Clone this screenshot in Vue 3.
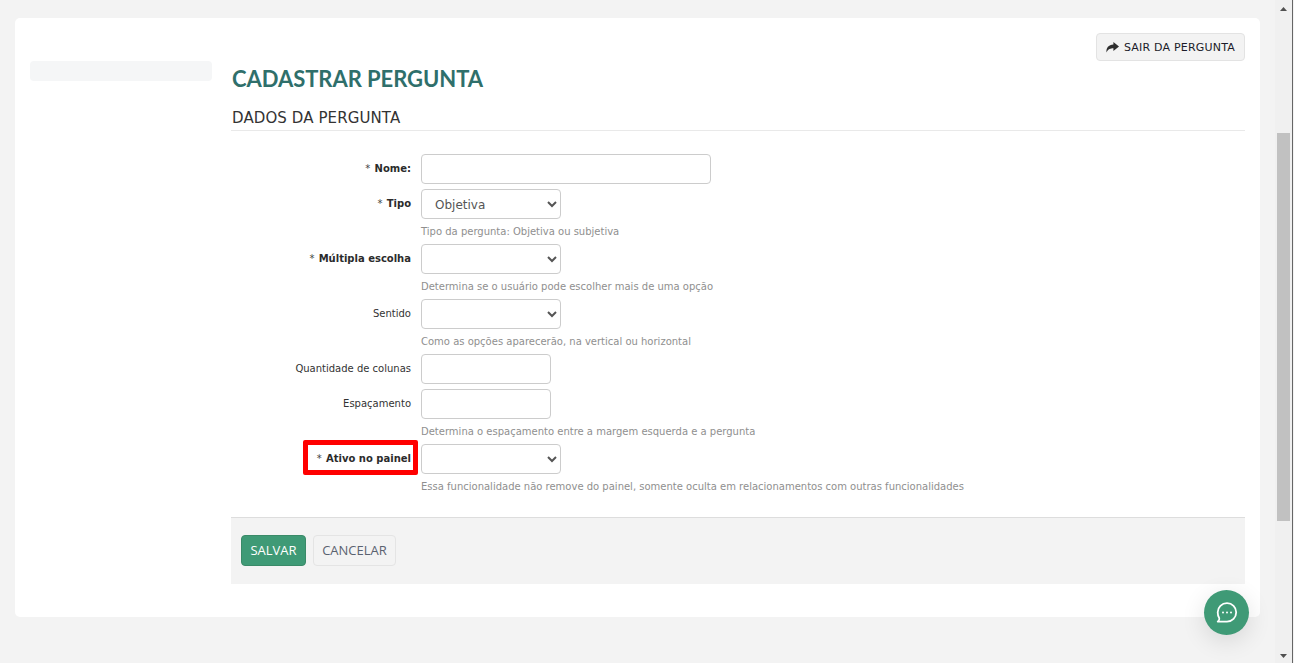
<script setup>
const fields = [
  { label: 'Nome:', req: true, type: 'input', size: 'wide' },
  { label: 'Tipo', req: true, type: 'select', value: 'Objetiva', hint: 'Tipo da pergunta: Objetiva ou subjetiva' },
  { label: 'Múltipla escolha', req: true, type: 'select', hint: 'Determina se o usuário pode escolher mais de uma opção' },
  { label: 'Sentido', type: 'select', hint: 'Como as opções aparecerão, na vertical ou horizontal' },
  { label: 'Quantidade de colunas', type: 'input', size: 'small' },
  { label: 'Espaçamento', type: 'input', size: 'small', hint: 'Determina o espaçamento entre a margem esquerda e a pergunta' },
  { label: 'Ativo no painel', req: true, type: 'select', marked: true, hint: 'Essa funcionalidade não remove do painel, somente oculta em relacionamentos com outras funcionalidades' }
]
</script>

<template>
  <div class="page">
    <main class="viewport">
      <section class="card">
        <aside class="side"><div class="side-pill"></div></aside>
        <div class="content">
          <div class="top-actions">
            <button class="exit" type="button">
              <svg width="13" height="11" viewBox="0 0 13 11"><path d="M7.400 0 13 4.500 7.400 9V6.200C4.600 6.200 2.200 6.800 .5 10.500 0 6 2.600 2.800 7.400 2.600Z" fill="#2e2e2e"/></svg>
              SAIR DA PERGUNTA
            </button>
          </div>
          <h1 class="title">CADASTRAR PERGUNTA</h1>
          <h2 class="section">DADOS DA PERGUNTA</h2>
          <form class="form">
            <div v-for="f in fields" :key="f.label" class="group">
              <div class="row">
                <label class="label" :class="{ strong: f.req }"><span v-if="f.req" class="star">* </span>{{ f.label }}</label>
                <div class="control">
                  <select v-if="f.type === 'select'" class="fld sel">
                    <option>{{ f.value || '' }}</option>
                  </select>
                  <input v-else class="fld" :class="f.size" type="text" />
                  <span v-if="f.marked" class="mark"></span>
                </div>
              </div>
              <p v-if="f.hint" class="hint">{{ f.hint }}</p>
            </div>
          </form>
          <div class="footer">
            <button class="save" type="button">SALVAR</button>
            <button class="cancel" type="button">CANCELAR</button>
          </div>
        </div>
      </section>
    </main>
    <div class="scrollbar">
      <svg class="arrow up" width="7" height="4" viewBox="0 0 7 4"><path d="M3.500 0 7 4H0Z" fill="#505050"/></svg>
      <div class="thumb"></div>
      <svg class="arrow down" width="7" height="4" viewBox="0 0 7 4"><path d="M0 0h7L3.500 4Z" fill="#505050"/></svg>
    </div>
    <button class="chat" type="button" aria-label="Chat">
      <svg width="24" height="24" viewBox="0 0 24 24" fill="none">
        <path d="M12 2.200c5.200 0 9.200 4 9.200 9.100 0 5.200-4 9.300-9.200 9.300H2.700c1.300-1 1.900-2.100 1.600-3.300C3.200 15.800 2.700 13.600 2.700 11.300 2.700 6.200 6.800 2.200 12 2.200Z" stroke="#fff" stroke-width="1.800" stroke-linejoin="round"/>
        <circle cx="8" cy="11.500" r="1" fill="#fff"/><circle cx="12" cy="11.500" r="1" fill="#fff"/><circle cx="16" cy="11.500" r="1" fill="#fff"/>
      </svg>
    </button>
  </div>
</template>

<style>
html, body { margin: 0; overflow: hidden; background: #f3f3f3; }
</style>

<style scoped>
.page { position: relative; display: flex; width: 1294px; height: 663px; overflow: hidden; background: #f3f3f3; font-family: "DejaVu Sans", sans-serif; }
.viewport { flex: 1; min-width: 0; padding: 18px 34px 0 15px; box-sizing: border-box; }
.card { display: flex; gap: 19px; height: 599px; box-sizing: border-box; padding: 15px 15px 0; background: #fff; border-radius: 5px; }
.side { width: 182px; flex: none; padding-top: 28px; }
.side-pill { height: 20px; background: #f5f6f7; border-radius: 4px; }
.content { flex: 1; min-width: 0; }
.top-actions { display: flex; justify-content: flex-end; height: 28px; }
.exit { display: flex; align-items: center; gap: 5px; height: 28px; padding: 0 9px; box-sizing: border-box; border: 1px solid #e3e3e3; border-radius: 4px; background: #f3f3f3; color: #1c1c2a; font: 11px "DejaVu Sans", sans-serif; letter-spacing: .2px; }
.title { margin: 4px 0 0 1px; height: 28px; font: 700 22px/28px Lato, sans-serif; letter-spacing: -.05px; color: #2f6f6b; }
.section { margin: 15px 0 0; padding: 0 0 2px 1px; height: 20px; font: 400 15px/20px "DejaVu Sans", sans-serif; letter-spacing: .1px; color: #333; border-bottom: 1px solid #e9e9e9; box-sizing: content-box; }
.form { padding-top: 23px; }
.group { margin-bottom: 5px; }
.row { display: flex; gap: 10px; height: 30px; }
.label { width: 180px; flex: none; text-align: right; font-size: 10px; line-height: 30px; color: #333; white-space: nowrap; }
.label.strong { font-weight: 700; color: #2b2b2b; }
.star { font-weight: 400; color: #444; margin-right: 1px; }
.control { position: relative; }
.fld { display: block; box-sizing: border-box; height: 30px; border: 1px solid #ccc; border-radius: 4px; background: #fff; font: 12px "DejaVu Sans", sans-serif; color: #555; outline: 0; }
.fld.wide { width: 290px; }
.fld.small { width: 130px; }
.sel { width: 140px; padding: 1px 6px 0 9px; }
.mark { position: absolute; left: -118px; top: -4px; width: 115px; height: 35px; box-sizing: border-box; border: 5px solid #f00; border-radius: 2px; pointer-events: none; }
.hint { margin: 0 0 0 190px; height: 20px; padding-top: 7px; box-sizing: border-box; font-size: 10px; line-height: 12px; color: #8f8f8f; white-space: nowrap; }
.footer { display: flex; align-items: flex-start; gap: 7px; margin-top: 23px; height: 67px; padding: 17px 10px 0; box-sizing: border-box; background: #f3f3f3; border-top: 1px solid #ddd; }
.save, .cancel { height: 31px; padding: 0 0 2px; box-sizing: border-box; border-radius: 4px; font: 500 13px "Open Sans", sans-serif; }
.save { width: 65px; border: 1px solid #3a8a68; background: #3f9a76; color: #fff; }
.cancel { width: 83px; border: 1px solid #e4e4e4; background: #f3f3f3; color: #5a6270; }
.scrollbar { position: absolute; right: 1px; top: 0; width: 18px; height: 663px; background: #f0f0f0; border-right: 1px solid #666; box-sizing: border-box; }
.thumb { position: absolute; left: 2px; top: 133px; width: 13px; height: 388px; background: #c1c1c1; }
.arrow { position: absolute; left: 5px; }
.arrow.up { top: 7px; }
.arrow.down { bottom: 5px; }
.chat { position: absolute; left: 1204px; top: 590px; width: 45px; height: 45px; padding: 0; display: flex; align-items: center; justify-content: center; border: 0; border-radius: 50%; background: #3f9a76; box-shadow: 0 6px 24px rgba(0,0,0,.12); }
</style>
